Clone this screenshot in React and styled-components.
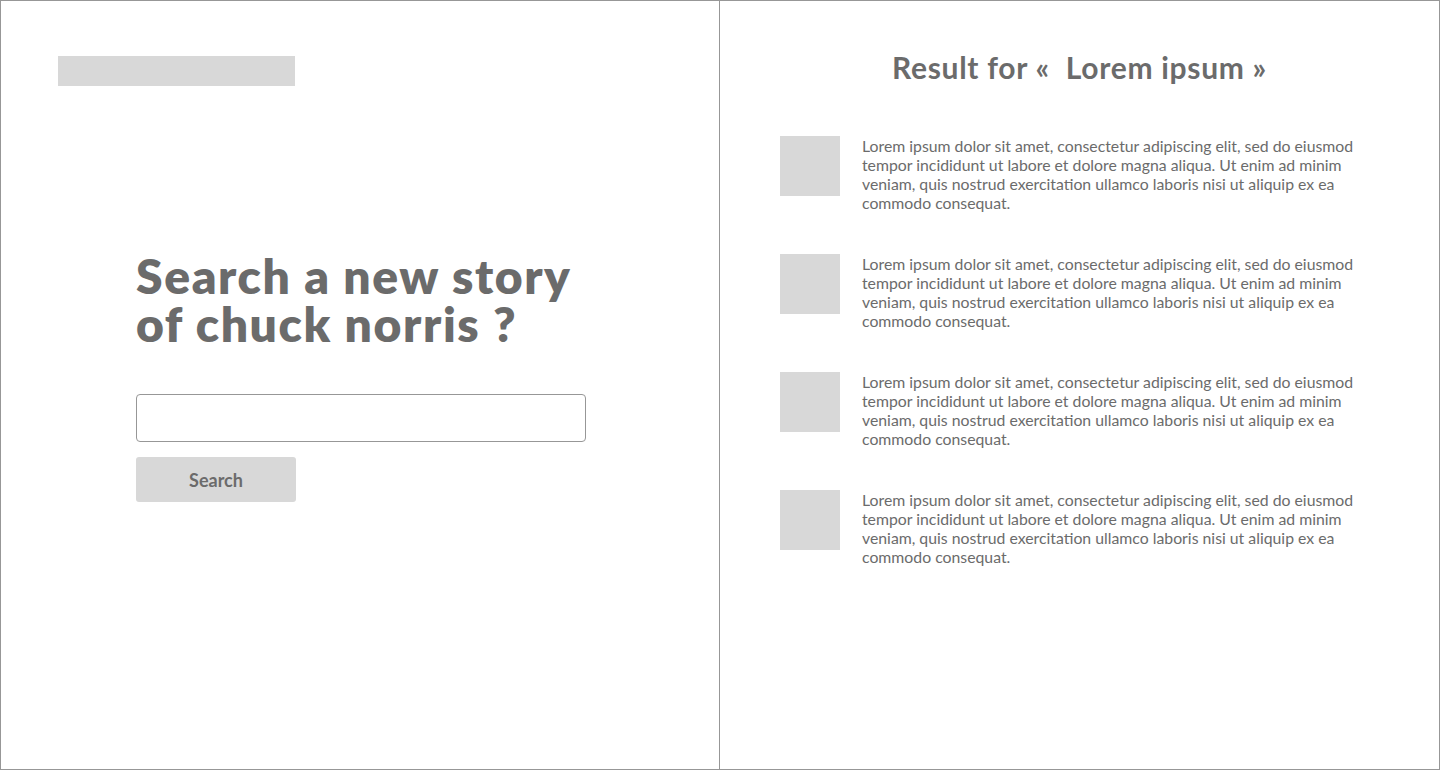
import React from 'react';
import styled, { createGlobalStyle } from 'styled-components';

const results = [1, 2, 3, 4].map((id) => ({
    id,
    text: 'Lorem ipsum dolor sit amet, consectetur adipiscing elit, sed do eiusmod tempor incididunt ut labore et dolore magna aliqua. Ut enim ad minim veniam, quis nostrud exercitation ullamco laboris nisi ut aliquip ex ea commodo consequat.',
}));

export default function App() {
    return (
        <>
            <GlobalStyle />
            <Page>
                <SearchPanel>
                    <LogoPlaceholder />
                    <SearchForm onSubmit={(e) => e.preventDefault()}>
                        <Heading>
                            <HeadingLine>Search a new story</HeadingLine>
                            <HeadingLine>of chuck norris ?</HeadingLine>
                        </Heading>
                        <SearchInput type="text" />
                        <SearchButton type="submit">Search</SearchButton>
                    </SearchForm>
                </SearchPanel>
                <ResultPanel>
                    <ResultTitle>{'Result for «  Lorem ipsum »'}</ResultTitle>
                    <ResultList>
                        {results.map((r) => (
                            <ResultRow key={r.id}>
                                <Thumb />
                                <ResultText>{r.text}</ResultText>
                            </ResultRow>
                        ))}
                    </ResultList>
                </ResultPanel>
            </Page>
        </>
    );
}

const GlobalStyle = createGlobalStyle`
    * {
        box-sizing: border-box;
    }
    body {
        margin: 0;
        background: #fff;
        font-family: Lato, "Open Sans", sans-serif;
        color: #6b6b6b;
    }
`;

const Page = styled.div`
    display: flex;
    width: 1440px;
    height: 770px;
`;

const SearchPanel = styled.section`
    display: flex;
    flex-direction: column;
    width: 720px;
    height: 100%;
    border: 1px solid #979797;
    padding: 55px 0 0 57px;
`;

const LogoPlaceholder = styled.div`
    width: 237px;
    height: 30px;
    background: #d8d8d8;
`;

const SearchForm = styled.form`
    display: flex;
    flex-direction: column;
    align-items: flex-start;
    margin: 166px 0 0 78px;
`;

const Heading = styled.h1`
    display: flex;
    flex-direction: column;
    margin: 0;
    font-family: Lato, sans-serif;
    font-weight: 800;
    font-size: 48px;
    letter-spacing: 1.6px;
    color: #6b6b6b;
`;

const HeadingLine = styled.span`
    display: block;
    height: 48px;
    line-height: 48px;
    white-space: nowrap;
`;

const SearchInput = styled.input`
    width: 450px;
    height: 48px;
    margin-top: 46px;
    border: 1px solid #979797;
    border-radius: 4px;
    padding: 0 12px;
    font-family: Lato, sans-serif;
    font-size: 16px;
    color: #6b6b6b;
    outline: none;
`;

const SearchButton = styled.button`
    width: 160px;
    height: 45px;
    margin-top: 15px;
    border: none;
    border-radius: 3px;
    background: #d8d8d8;
    font-family: Lato, sans-serif;
    font-weight: 700;
    font-size: 18px;
    color: #6b6b6b;
    cursor: pointer;
`;

const ResultPanel = styled.section`
    display: flex;
    flex-direction: column;
    width: 720px;
    height: 100%;
    border: 1px solid #979797;
    border-left: none;
    padding: 47px 0 0 60px;
`;

const ResultTitle = styled.h2`
    margin: 0 0 0 -60px;
    text-align: center;
    white-space: pre;
    font-family: Lato, sans-serif;
    font-weight: 700;
    font-size: 30px;
    line-height: 38px;
    letter-spacing: 0.7px;
    color: #6b6b6b;
`;

const ResultList = styled.div`
    display: flex;
    flex-direction: column;
    gap: 42px;
    margin-top: 50px;
`;

const ResultRow = styled.article`
    display: flex;
    align-items: flex-start;
    gap: 22px;
`;

const Thumb = styled.div`
    flex: none;
    width: 60px;
    height: 60px;
    background: #d8d8d8;
`;

const ResultText = styled.p`
    margin: 0;
    width: 510px;
    font-family: Lato, sans-serif;
    font-size: 15.8px;
    line-height: 19px;
    color: #6b6b6b;
`;
